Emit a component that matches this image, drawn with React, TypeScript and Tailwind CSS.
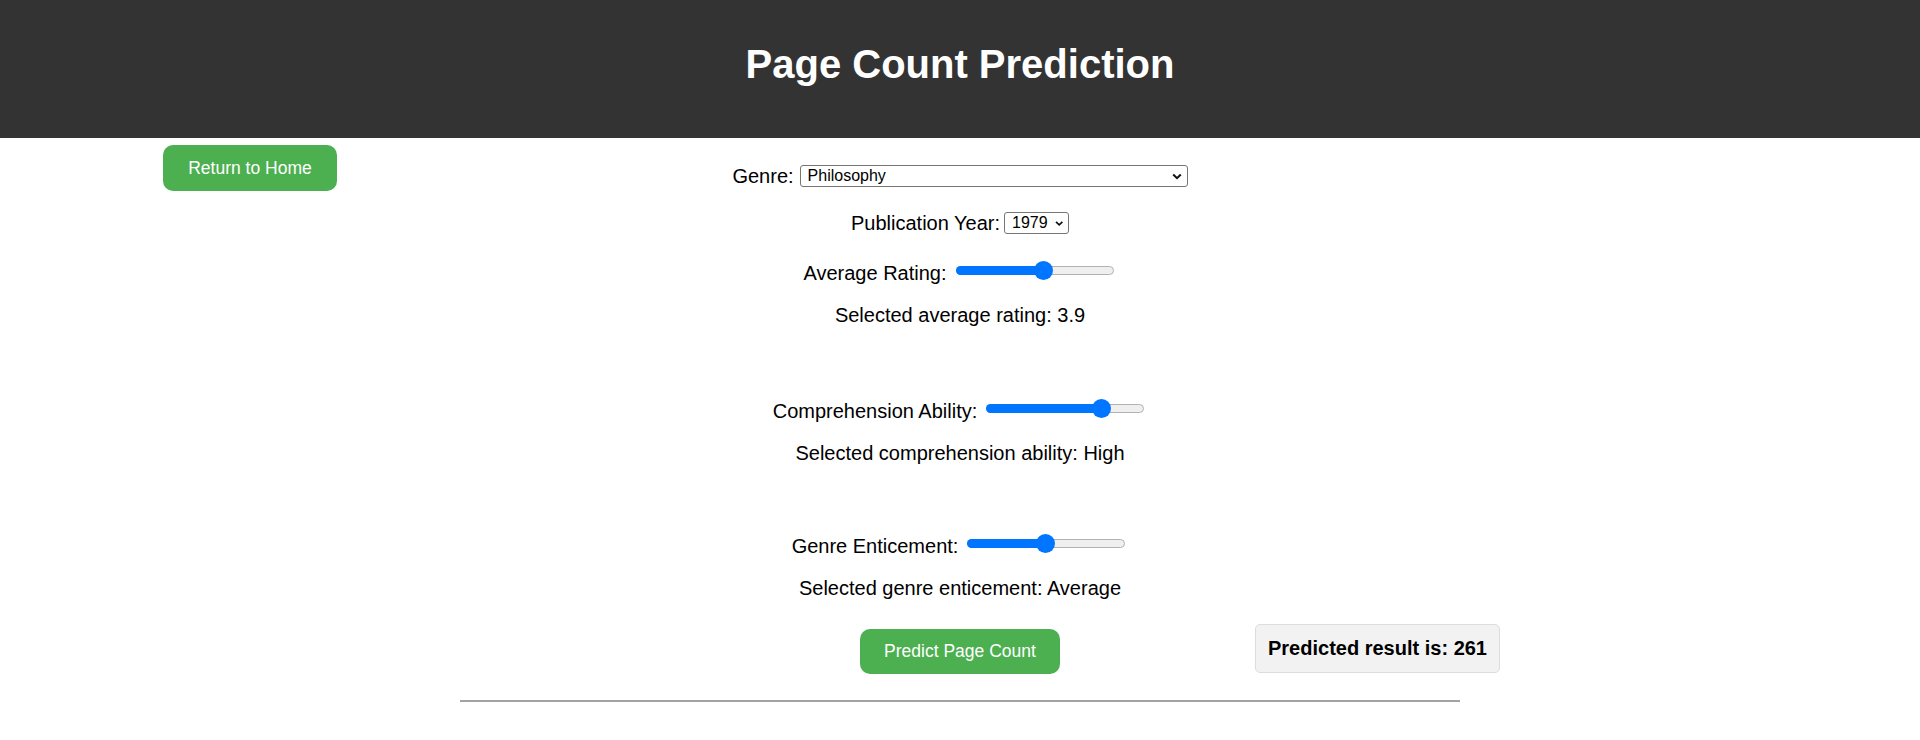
import { useState } from 'react';

const font = { fontFamily: '"Liberation Sans", Arial, sans-serif' };

function Select({ value, width }: { value: string; width: string }) {
  return (
    <div
      className={`flex h-[22px] items-center justify-between rounded-[3px] border border-[#767676] bg-white pl-[7px] pr-[5px] text-[16px] text-black ${width}`}
    >
      <span className="leading-none">{value}</span>
      <svg width="10" height="7" viewBox="0 0 10 7" className="ml-[7px]">
        <path d="M1.2 1.5 L5 5.2 L8.8 1.5" stroke="#111" strokeWidth="2" fill="none" />
      </svg>
    </div>
  );
}

function Slider({ thumb }: { thumb: number }) {
  // thumb = centre of the knob measured from the track's left edge, in px
  return (
    <div className="relative ml-[9px] mr-[3px] mb-[7px] h-[19px] w-[158px] shrink-0">
      <div className="absolute inset-x-0 top-[5px] h-[9px] rounded-full border border-[#b2b2b2] bg-[#efefef]" />
      <div className="absolute left-0 top-[5px] h-[9px] rounded-full bg-[#0075ff]" style={{ width: thumb }} />
      <div
        className="absolute top-0 h-[19px] w-[19px] rounded-full bg-[#0075ff]"
        style={{ left: thumb - 9.5 }}
      />
    </div>
  );
}

function SliderRow({ label, thumb, className }: { label: string; thumb: number; className: string }) {
  return (
    <div className={`flex h-[23px] items-center ${className}`}>
      <span>{label}</span>
      <Slider thumb={thumb} />
    </div>
  );
}

export default function App() {
  const [result] = useState(261);

  return (
    <div className="min-h-[740px] bg-white text-[20px] leading-[23px] text-black" style={font}>
      <header className="h-[138px] bg-[#333333] pt-[41px] text-center">
        <h1 className="text-[40px] font-bold leading-[46px] text-white">Page Count Prediction</h1>
      </header>

      <main className="relative flex flex-col items-center pt-[27px]">
        <button className="absolute left-[163px] top-[7px] h-[46px] w-[174px] rounded-[10px] bg-[#4caf50] text-[17.5px] text-white">
          Return to Home
        </button>

        <div className="flex h-[22px] items-center gap-[6px]">
          <span>Genre:</span>
          <Select value="Philosophy" width="w-[388px]" />
        </div>

        <div className="mt-[25px] flex h-[22px] items-center gap-[4px]">
          <span>Publication Year:</span>
          <Select value="1979" width="w-[65px]" />
        </div>

        <SliderRow label="Average Rating:" thumb={87.5} className="mt-[28px]" />
        <p className="mt-[19px] h-[23px]">Selected average rating: 3.9</p>

        <SliderRow label="Comprehension Ability:" thumb={115} className="mt-[73px]" />
        <p className="mt-[19px] h-[23px]">Selected comprehension ability: High</p>

        <SliderRow label="Genre Enticement:" thumb={78} className="mt-[70px]" />
        <p className="mt-[19px] h-[23px]">Selected genre enticement: Average</p>

        <div className="mt-[24px] grid w-full grid-cols-[1fr_auto_1fr] items-start">
          <div />
          <button className="mt-[5px] h-[45px] w-[200px] rounded-[10px] bg-[#4caf50] text-[17.5px] text-white">
            Predict Page Count
          </button>
          <div className="ml-[195px] justify-self-start rounded-[5px] border border-[#dddddd] bg-[#f2f2f2] px-[12px] py-[12px] text-[20px] font-bold leading-[23px]">
            Predicted result is: {result}
          </div>
        </div>

        <hr className="mt-[26px] w-[1000px] border-t-2 border-[#a3a3a3]" />
      </main>
    </div>
  );
}
